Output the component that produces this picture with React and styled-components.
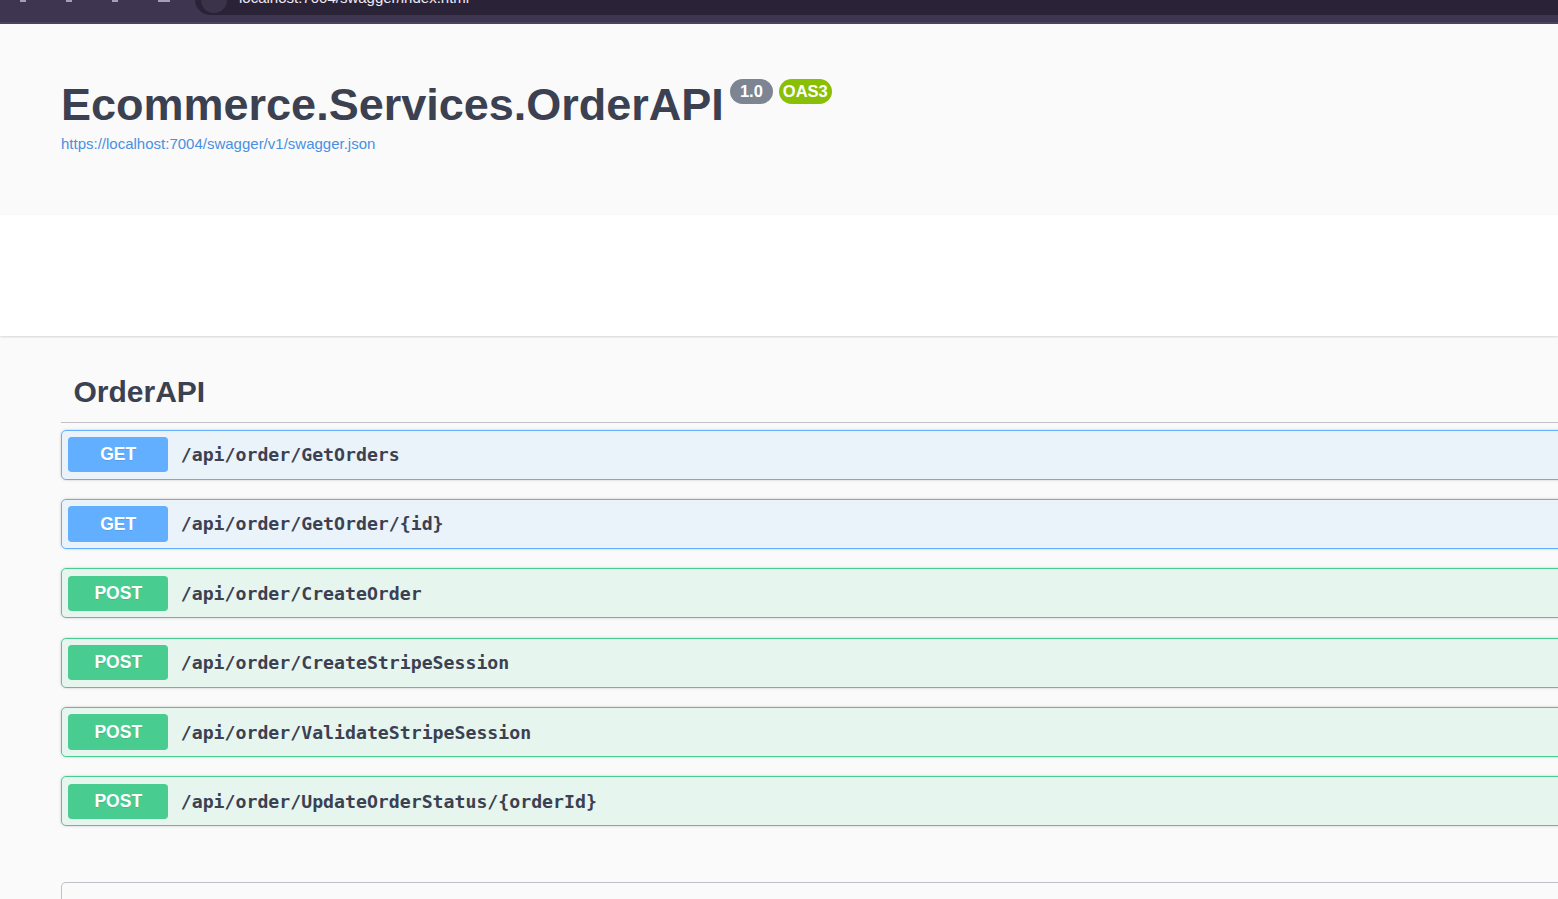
import styled, { createGlobalStyle } from 'styled-components';

const GlobalStyle = createGlobalStyle`
  html, body {
    margin: 0;
    padding: 0;
    background: #fafafa;
    overflow-x: hidden;
    font-family: "Liberation Sans", Arial, sans-serif;
  }
`;

const BrowserBar = styled.div`
  display: flex;
  align-items: flex-start;
  height: 22px;
  background: #3e3650;
  border-bottom: 2px solid #4a4459;
  overflow: hidden;
`;

const NavIcons = styled.div`
  display: flex;
  gap: 40px;
  width: 195px;
  padding-left: 20px;
  box-sizing: border-box;
  margin-top: -4px;
`;

const NavDot = styled.span`
  width: ${(p) => (p.$square ? '12px' : '6px')};
  height: 6px;
  border-bottom: 2px solid #a59fb3;
  box-sizing: border-box;
`;

const UrlPill = styled.div`
  flex: 1;
  display: flex;
  align-items: center;
  gap: 12px;
  height: 31px;
  margin-top: -16px;
  padding-left: 6px;
  background: #2a2337;
  border-radius: 16px 0 0 16px;
`;

const SiteIcon = styled.span`
  width: 26px;
  height: 26px;
  border-radius: 50%;
  background: #3b3349;
`;

const UrlText = styled.span`
  color: #eeeaf4;
  font-family: "Liberation Sans", Arial, sans-serif;
  font-size: 15px;
  margin-top: -5px;
`;

const Info = styled.div`
  height: 191px;
  padding: 58px 61px 0;
  box-sizing: border-box;
`;

const TitleRow = styled.div`
  display: flex;
  align-items: flex-start;
`;

const Title = styled.h2`
  margin: 0;
  font-size: 45px;
  line-height: 45px;
  font-weight: 700;
  color: #3b4151;
`;

const Badges = styled.div`
  display: flex;
  gap: 6px;
  margin: -3px 0 0 6px;
`;

const Badge = styled.span`
  height: 25px;
  padding: 0 ${(p) => p.$pad}px;
  border-radius: 57px;
  background: ${(p) => p.$bg};
  color: #fff;
  font-size: 16.5px;
  font-weight: 700;
  line-height: 25px;
`;

const BaseUrl = styled.a`
  display: block;
  margin-top: 8px;
  font-size: 15px;
  color: #4990e2;
  text-decoration: none;
`;

const SchemeContainer = styled.div`
  height: 121px;
  background: #fff;
  box-shadow: 0 1px 2px 0 rgba(0, 0, 0, 0.15);
`;

const TagSection = styled.section`
  padding: 26px 0 0 61px;
  width: calc(100% + 20px);
  box-sizing: border-box;
`;

const TagHeader = styled.h3`
  margin: 0 0 7px;
  padding: 12.5px 25px 12.5px 12.5px;
  font-size: 30px;
  line-height: 34.5px;
  font-weight: 700;
  color: #3b4151;
  border-bottom: 1px solid rgba(59, 65, 81, 0.3);
`;

const methods = {
  GET: { color: '#61affe', bg: 'rgba(97, 175, 254, 0.1)' },
  POST: { color: '#49cc90', bg: 'rgba(73, 204, 144, 0.1)' },
};

const OpBlock = styled.div`
  display: flex;
  align-items: center;
  padding: 6.25px;
  margin-bottom: 19.4px;
  border: 1px solid ${(p) => methods[p.$method].color};
  background: ${(p) => methods[p.$method].bg};
  border-radius: 5px;
  box-shadow: 0 0 3px rgba(0, 0, 0, 0.19);
`;

const Method = styled.span`
  min-width: 100px;
  padding: 7.5px 0;
  line-height: 20.5px;
  text-align: center;
  border-radius: 3.75px;
  background: ${(p) => methods[p.$method].color};
  color: #fff;
  font-size: 17.5px;
  font-weight: 700;
  text-shadow: 0 1px 0 rgba(0, 0, 0, 0.1);
`;

const Path = styled.span`
  padding: 0 12.5px;
  font-family: "DejaVu Sans Mono", "Liberation Mono", monospace;
  font-size: 18.2px;
  font-weight: 600;
  color: #3b4151;
`;

const Models = styled.div`
  margin-top: 56px;
  height: 40px;
  border: 1px solid rgba(59, 65, 81, 0.3);
  border-bottom: none;
  border-radius: 5px 5px 0 0;
`;

const operations = [
  { method: 'GET', path: '/api/order/GetOrders' },
  { method: 'GET', path: '/api/order/GetOrder/{id}' },
  { method: 'POST', path: '/api/order/CreateOrder' },
  { method: 'POST', path: '/api/order/CreateStripeSession' },
  { method: 'POST', path: '/api/order/ValidateStripeSession' },
  { method: 'POST', path: '/api/order/UpdateOrderStatus/{orderId}' },
];

const App = () => {
  return (
    <>
      <GlobalStyle />
      <BrowserBar>
        <NavIcons>
          <NavDot />
          <NavDot />
          <NavDot />
          <NavDot $square />
        </NavIcons>
        <UrlPill>
          <SiteIcon />
          <UrlText>localhost:7004/swagger/index.html</UrlText>
        </UrlPill>
      </BrowserBar>
      <Info>
        <TitleRow>
          <Title>Ecommerce.Services.OrderAPI</Title>
          <Badges>
            <Badge $bg="#7d8492" $pad={10}>1.0</Badge>
            <Badge $bg="#89bf04" $pad={4}>OAS3</Badge>
          </Badges>
        </TitleRow>
        <BaseUrl href="#">https://localhost:7004/swagger/v1/swagger.json</BaseUrl>
      </Info>
      <SchemeContainer />
      <TagSection>
        <TagHeader>OrderAPI</TagHeader>
        {operations.map((op) => (
          <OpBlock key={op.path} $method={op.method}>
            <Method $method={op.method}>{op.method}</Method>
            <Path>{op.path}</Path>
          </OpBlock>
        ))}
        <Models />
      </TagSection>
    </>
  );
};

export default App;
